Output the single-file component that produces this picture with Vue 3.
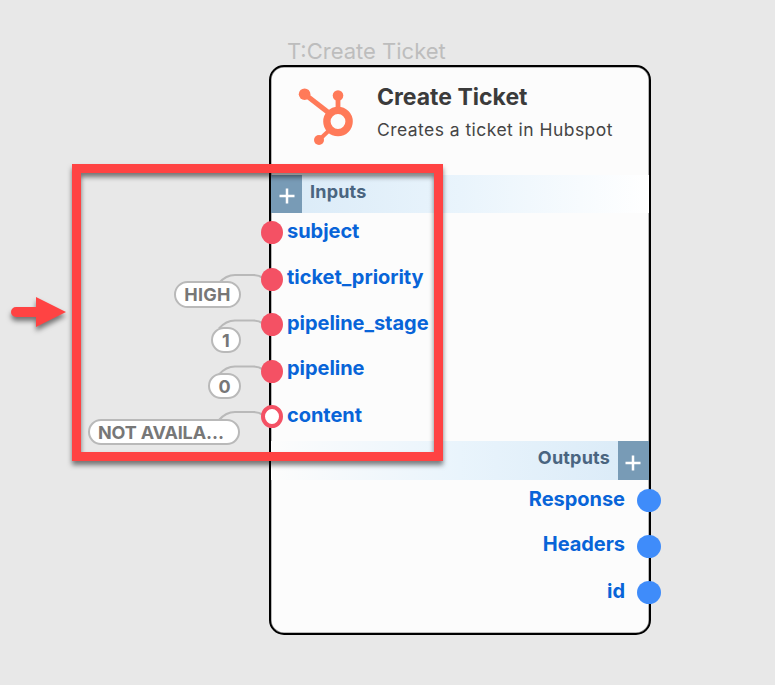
<script setup>
const inputs = [
  { name: 'subject', dot: 0, text: 0 },
  { name: 'ticket_priority', dot: 1, text: 0 },
  { name: 'pipeline_stage', dot: 0, text: 0 },
  { name: 'pipeline', dot: 1, text: -1 },
  { name: 'content', dot: 0, text: 0, open: true }
]
const outputs = [
  { name: 'Response', text: 0 },
  { name: 'Headers', text: -1 },
  { name: 'id', text: 0 }
]
const pills = [
  { id: 'high', label: 'HIGH', x: 174, y: 281, w: 67, h: 27, wire: 275 },
  { id: 'one', label: '1', x: 211, y: 327, w: 30, h: 26, wire: 320.5 },
  { id: 'zero', label: '0', x: 208, y: 373, w: 33, h: 26, wire: 366.5 },
  { id: 'na', label: 'NOT AVAILA…', x: 88, y: 419, w: 152, h: 26, wire: 412 }
]
</script>

<template>
  <main class="canvas">
    <svg class="layer" width="775" height="685">
      <path v-for="p in pills" :key="p.id" class="wire"
        :d="`M219 ${p.wire + 8} Q226 ${p.wire} 235 ${p.wire} H253 Q259 ${p.wire} 263 ${p.wire + 3}`" />
    </svg>

    <div class="node-title">T:Create Ticket</div>
    <section class="node">
      <header class="head">
        <svg class="logo" width="58" height="62" viewBox="297 86 58 62">
          <g fill="none" stroke="#ff7a59">
            <path d="M304.5 94 L329 113" stroke-width="5.2" />
            <path d="M338 96 V109" stroke-width="4.8" />
            <path d="M319 140 L330 129.500" stroke-width="4" />
            <circle cx="338" cy="121.500" r="11.100" stroke-width="7.400" />
          </g>
          <g fill="#ff7a59">
            <circle cx="304.600" cy="94.200" r="5.800" />
            <circle cx="338" cy="95.500" r="5.300" />
            <circle cx="319" cy="140" r="5" />
          </g>
        </svg>
        <div class="heading">
          <h1>Create Ticket</h1>
          <p>Creates a ticket in Hubspot</p>
        </div>
      </header>

      <div class="band band-in">
        <span class="plus"><svg width="16" height="16"><path d="M8 0.500V15.500M0.500 8H15.500" /></svg></span>
        <span class="band-label">Inputs</span>
      </div>
      <ul class="ports ports-in">
        <li v-for="i in inputs" :key="i.name">
          <i class="dot" :class="{ open: i.open }" :style="{ marginTop: i.dot * 2 + 'px' }"></i>
          <span class="port-name" :style="{ marginTop: i.text * 2 + 'px' }">{{ i.name }}</span>
        </li>
      </ul>

      <div class="band band-out">
        <span class="band-label">Outputs</span>
        <span class="plus"><svg width="16" height="16"><path d="M8 0.500V15.500M0.500 8H15.500" /></svg></span>
      </div>
      <ul class="ports ports-out">
        <li v-for="o in outputs" :key="o.name">
          <span class="port-name" :style="{ marginTop: o.text * 2 + 'px' }">{{ o.name }}</span>
          <i class="dot"></i>
        </li>
      </ul>
    </section>

    <div v-for="p in pills" :key="p.id" class="pill" :class="p.id"
      :style="{ left: p.x + 'px', top: p.y + 'px', width: p.w + 'px', height: p.h + 'px' }">{{ p.label }}</div>

    <svg class="layer marks" width="775" height="685">
      <rect x="76.500" y="168.500" width="362" height="288" fill="none" stroke="#ff4343" stroke-width="9" />
      <path d="M36 297 L66 312 L36 327 V317 H16 A5 5 0 0 1 16 307 H36 Z" fill="#ff4343" />
    </svg>
  </main>
</template>

<style>
body { background: #e8e8e8; }
</style>

<style scoped>
.canvas { position: relative; width: 775px; height: 685px; overflow: hidden; background: #e8e8e8; font-family: Inter, "Liberation Sans", sans-serif; }
.layer { position: absolute; left: 0; top: 0; }
.marks { filter: drop-shadow(0 4px 2.500px rgba(0, 0, 0, 0.5)); }
.wire { fill: none; stroke: #b9b9b9; stroke-width: 2.200; }
.node-title { position: absolute; left: 287px; top: 37px; font-size: 22px; line-height: 28px; color: #bdbdbd; white-space: nowrap; }
.node { position: absolute; left: 269px; top: 65px; width: 382px; height: 570px; box-sizing: border-box; border: 2px solid #000; border-radius: 15px; background: #fcfcfc; box-shadow: inset 0 0 0 0.500px #777; }
.head { display: flex; height: 108px; box-sizing: border-box; padding: 19px 0 0 26px; }
.logo { flex: none; }
.heading { margin-left: 22px; }
h1 { margin: -5px 0 0; font-size: 23px; line-height: 32px; font-weight: 700; color: #3b3b3b; white-space: nowrap; }
p { margin: 4px 0 0; font-size: 17.500px; letter-spacing: 0.450px; line-height: 26px; color: #454545; white-space: nowrap; }
.band { display: flex; height: 38px; }
.band-in { background: linear-gradient(90deg, #d9eaf7, #e9f4fc 50%, #ffffff); }
.band-out { height: 39px; justify-content: flex-end; background: linear-gradient(270deg, #d9eaf7, #e9f4fc 50%, #fcfcfc); }
.plus { display: flex; align-items: center; justify-content: center; width: 31px; padding-top: 4px; box-sizing: border-box; background: #789bb6; }
.plus path { stroke: #fff; stroke-width: 2.500; }
.band-out .plus { padding-right: 1px; }
.band-label { padding: 0 8px; font-size: 18px; letter-spacing: 0.200px; line-height: 33px; font-weight: 700; color: #4a6580; }
.ports { list-style: none; margin: 0; padding: 0; }
.ports li { display: flex; align-items: center; height: 46px; }
.ports-in { margin-left: -10px; margin-top: -4px; height: 232px; }
.ports-out li { justify-content: flex-end; }
.ports-out { margin-right: -12px; margin-top: -3px; }
.dot { flex: none; width: 22px; height: 23px; border-radius: 50%; box-sizing: border-box; background: #f45164; }
.dot.open { border: 4.500px solid #f45164; background: #fff; }
.ports-out .dot { width: 24px; margin-left: 12px; background: #3f8cfa; }
.port-name { font-size: 20px; letter-spacing: -0.040px; line-height: 28px; font-weight: 700; color: #0864d8; position: relative; top: -1px; }
.ports-in .port-name { margin-left: 4px; }
.pill { position: absolute; display: flex; align-items: center; justify-content: center; box-sizing: border-box; border: 2px solid #b9b9b9; border-radius: 14px; background: #fff; color: #777; font-size: 18px; font-weight: 700; white-space: nowrap; }
.pill.high { letter-spacing: 0.200px; }
.pill.na { justify-content: flex-start; padding-left: 8px; letter-spacing: -0.150px; }
</style>
